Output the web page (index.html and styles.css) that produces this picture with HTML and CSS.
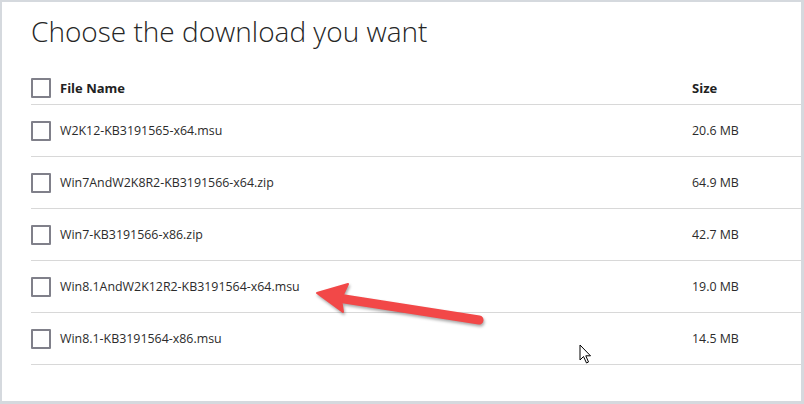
FILE: index.html
```html
<!DOCTYPE html>
<html lang="en">
<head>
  <meta charset="UTF-8">
  <title>Choose the download you want</title>
  <link rel="stylesheet" href="styles.css">
</head>
<body>
  <div class="frame">
    <h1 class="title">Choose the download you want</h1>

    <div class="files">
      <div class="row head">
        <span class="box"></span>
        <span class="name">File Name</span>
        <span class="size">Size</span>
      </div>
      <div class="row">
        <span class="box"></span>
        <span class="name">W2K12-KB3191565-x64.msu</span>
        <span class="size">20.6 MB</span>
      </div>
      <div class="row">
        <span class="box"></span>
        <span class="name">Win7AndW2K8R2-KB3191566-x64.zip</span>
        <span class="size">64.9 MB</span>
      </div>
      <div class="row">
        <span class="box"></span>
        <span class="name">Win7-KB3191566-x86.zip</span>
        <span class="size">42.7 MB</span>
      </div>
      <div class="row">
        <span class="box"></span>
        <span class="name">Win8.1AndW2K12R2-KB3191564-x64.msu</span>
        <span class="size">19.0 MB</span>
      </div>
      <div class="row">
        <span class="box"></span>
        <span class="name">Win8.1-KB3191564-x86.msu</span>
        <span class="size">14.5 MB</span>
      </div>
    </div>

    <!-- annotation arrow pointing at the x64 msu -->
    <svg class="arrow" width="200" height="70" viewBox="0 0 200 70">
      <line x1="38" y1="28" x2="179" y2="50" stroke="#f24848" stroke-width="9" stroke-linecap="round"/>
      <polygon points="17,23 48,14 41,29 43,42" fill="#f24848" stroke="#f24848" stroke-width="2" stroke-linejoin="round"/>
    </svg>

    <svg class="cursor" width="14" height="21" viewBox="0 0 14 21">
      <path d="M1 1 L1 16 L4.5 12.5 L7.5 19 L9.5 18 L6.8 11.8 L11.5 11.8 Z" fill="#fff" stroke="#000" stroke-width="1" stroke-linejoin="round"/>
    </svg>
  </div>
</body>
</html>
```

FILE: styles.css
```css
body {
  margin: 0;
  background: #ffffff;
  font-family: "Open Sans", "Noto Sans", sans-serif;
  color: #2b2b2b;
}

.frame {
  position: relative;
  width: 804px;
  height: 404px;
  box-sizing: border-box;
  border-style: solid;
  border-color: #d5d9de;
  border-width: 2px 3px 3px 2px;
  padding: 0 0 0 29px;
  overflow: hidden;
}

.title {
  margin: 8px 0 0 0;
  font-size: 28px;
  font-weight: 300;
  line-height: 42px;
  color: #262626;
}

.files {
  margin-top: 19px;
}

.row {
  display: grid;
  grid-template-columns: 29px 632px 1fr;
  align-items: center;
  box-sizing: border-box;
  height: 52px;
  border-bottom: 1px solid #d8d8d8;
  font-size: 12.4px;
}

.row.head {
  height: 34px;
  font-size: 13px;
  font-weight: 700;
  color: #222222;
}

.box {
  width: 20px;
  height: 20px;
  box-sizing: border-box;
  border: 2px solid #80808a;
  border-radius: 1px;
}

.arrow {
  position: absolute;
  left: 298px;
  top: 268px;
  filter: drop-shadow(1px 2px 1.5px rgba(0, 0, 0, 0.35));
}

.cursor {
  position: absolute;
  left: 577px;
  top: 342px;
}
```
